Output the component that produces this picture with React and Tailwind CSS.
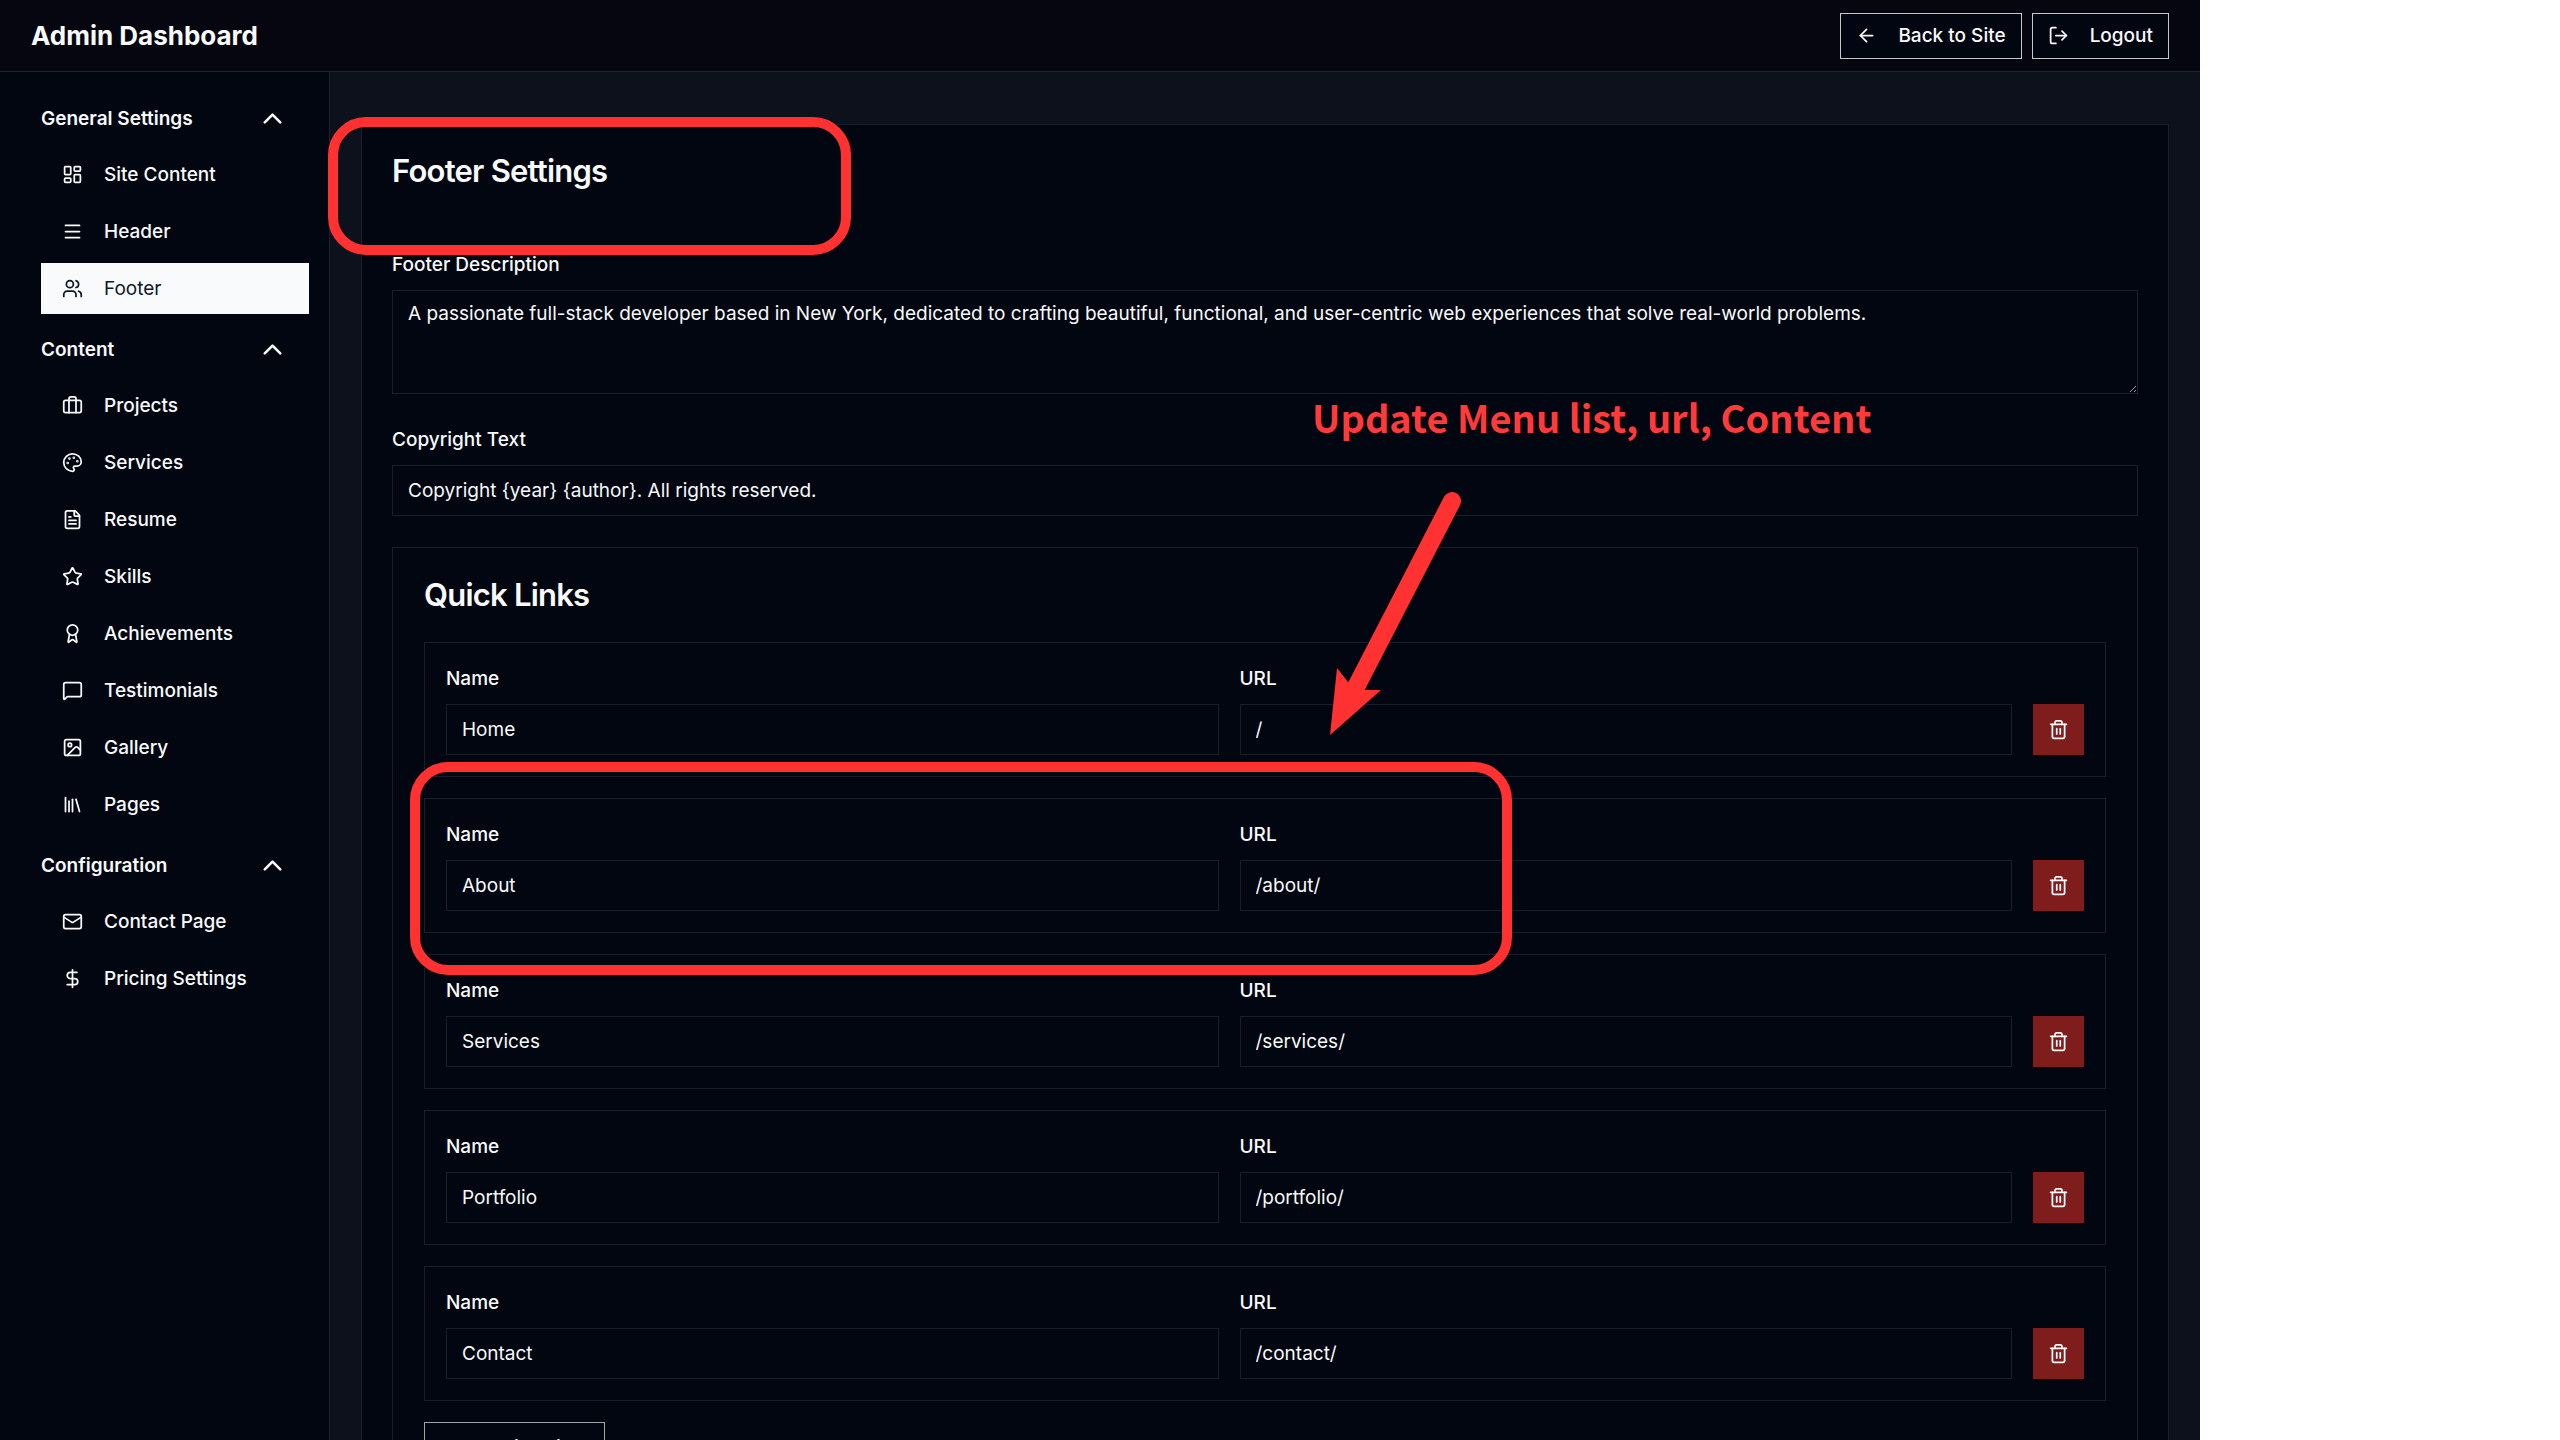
import {
  LayoutDashboard,
  Menu,
  Users,
  Briefcase,
  Palette,
  FileText,
  Star,
  Award,
  MessageSquare,
  Image,
  Library,
  Mail,
  DollarSign,
  ChevronUp,
  ArrowLeft,
  LogOut,
  Trash2
} from "lucide-react";

const NAV_GROUPS = [
  {
    title: "General Settings",
    items: [
      { label: "Site Content", icon: LayoutDashboard },
      { label: "Header", icon: Menu },
      { label: "Footer", icon: Users, active: true }
    ]
  },
  {
    title: "Content",
    items: [
      { label: "Projects", icon: Briefcase },
      { label: "Services", icon: Palette },
      { label: "Resume", icon: FileText },
      { label: "Skills", icon: Star },
      { label: "Achievements", icon: Award },
      { label: "Testimonials", icon: MessageSquare },
      { label: "Gallery", icon: Image },
      { label: "Pages", icon: Library }
    ]
  },
  {
    title: "Configuration",
    items: [
      { label: "Contact Page", icon: Mail },
      { label: "Pricing Settings", icon: DollarSign }
    ]
  }
];

const QUICK_LINKS = [
  { name: "Home", url: "/" },
  { name: "About", url: "/about/" },
  { name: "Services", url: "/services/" },
  { name: "Portfolio", url: "/portfolio/" },
  { name: "Contact", url: "/contact/" }
];

const Header = () => (
  <header className="flex h-[72px] items-center justify-between border-b border-[#1e222d] bg-[#05060f] px-[31px]">
    <h1 className="text-[26px] font-bold">Admin Dashboard</h1>
    <div className="flex gap-[10px]">
      <button className="flex h-[46px] items-center gap-[21px] border border-[#c5c7ca] bg-[#020610] px-[15px] font-medium">
        <ArrowLeft size={21} />
        Back to Site
      </button>
      <button className="flex h-[46px] items-center gap-[21px] border border-[#c5c7ca] bg-[#020610] px-[15px] font-medium">
        <LogOut size={21} />
        Logout
      </button>
    </div>
  </header>
);

const Sidebar = () => (
  <aside className="w-[330px] shrink-0 border-r border-[#1e222d] bg-[#020610] pt-[21px] pr-[20px] pl-[41px]">
    <nav className="flex flex-col gap-[10px]">
      {NAV_GROUPS.map((group) => (
        <div key={group.title} className="flex flex-col gap-[5px]">
          <button className="flex h-[51px] items-center justify-between pr-[21px] font-semibold">
            {group.title}
            <ChevronUp size={31} />
          </button>
          <ul className="flex flex-col gap-[6px]">
            {group.items.map(({ label, icon: Icon, active }) => (
              <li key={label}>
                <a
                  href="#"
                  className={
                    active
                      ? "flex h-[51px] items-center gap-[21px] bg-[#f8fafc] px-[21px] text-[#0f172a]"
                      : "flex h-[51px] items-center gap-[21px] px-[21px] font-medium"
                  }
                >
                  <Icon size={21} />
                  {label}
                </a>
              </li>
            ))}
          </ul>
        </div>
      ))}
    </nav>
  </aside>
);

const Field = ({ id, label, value }) => (
  <div className="flex min-w-0 flex-1 flex-col gap-[10px]">
    <label htmlFor={id} className="leading-[30px] font-medium">
      {label}
    </label>
    <input
      id={id}
      type="text"
      defaultValue={value}
      className="h-[51px] w-full border border-[#181e2a] bg-transparent px-[15px]"
    />
  </div>
);

const QuickLinkRow = ({ link, index }) => (
  <div className="flex items-end gap-[21px] border border-[#181e2a] p-[21px]">
    <Field id={`link-name-${index}`} label="Name" value={link.name} />
    <Field id={`link-url-${index}`} label="URL" value={link.url} />
    <button
      aria-label={`Delete ${link.name}`}
      className="flex h-[51px] w-[51px] shrink-0 items-center justify-center bg-[#7f1d1d]"
    >
      <Trash2 size={21} />
    </button>
  </div>
);

const FooterSettings = () => (
  <section className="border border-[#181e2a] bg-[#020610] p-[30px]">
    <h2 className="mb-[64px] text-[31px] leading-[31px] font-semibold tracking-tight">
      Footer Settings
    </h2>

    <div className="flex flex-col gap-[31px]">
      {/* DESCRIPTION */}
      <div className="flex flex-col gap-[10px]">
        <label htmlFor="description" className="leading-[30px] font-medium">
          Footer Description
        </label>
        <textarea
          id="description"
          className="h-[104px] w-full resize-y scheme-dark border border-[#181e2a] bg-transparent px-[15px] py-[10px] leading-[25px]"
          defaultValue="A passionate full-stack developer based in New York, dedicated to crafting beautiful, functional, and user-centric web experiences that solve real-world problems."
        />
      </div>

      {/* COPYRIGHT */}
      <Field
        id="copyright"
        label="Copyright Text"
        value="Copyright {year} {author}. All rights reserved."
      />

      {/* QUICK LINKS */}
      <div className="border border-[#181e2a] p-[31px]">
        <h2 className="mb-[32px] text-[31px] leading-[31px] font-semibold tracking-tight">
          Quick Links
        </h2>
        <div className="flex flex-col items-stretch gap-[21px]">
          {QUICK_LINKS.map((link, index) => (
            <QuickLinkRow key={link.name} link={link} index={index} />
          ))}
          <button className="h-[51px] self-start border border-[#a0a3a8] px-[21px] font-medium">
            Add Quick Link
          </button>
        </div>
      </div>
    </div>
  </section>
);

// Red callouts drawn over the page
const Annotations = () => (
  <div className="pointer-events-none absolute inset-0 text-[#ff3131]">
    <div className="absolute top-[117px] left-[328px] h-[138px] w-[523px] rounded-[38px] border-[10px] border-current" />
    <div className="absolute top-[762px] left-[410px] h-[213px] w-[1102px] rounded-[38px] border-[10px] border-current" />
    <p className="absolute top-[391px] left-[1312px] font-['Noto_Sans_CJK_SC',sans-serif] text-[38px] leading-[52px] font-bold whitespace-nowrap text-[#ff3a3a]">
      Update Menu list, url, Content
    </p>
    <svg
      width="136"
      height="246"
      viewBox="0 0 136 246"
      className="absolute top-[491px] left-[1328px]"
    >
      <path d="M124 10 L26 200" stroke="currentColor" strokeWidth="18" strokeLinecap="round" />
      <path d="M2 244 L9 177 L20 191 L36 199 L53 199 Z" fill="currentColor" />
    </svg>
  </div>
);

export default function App() {
  return (
    <div className="relative h-screen overflow-hidden bg-white font-['Inter',sans-serif] text-[19px] leading-[29px] text-[#f8fafc]">
      <div className="mr-[360px] flex h-full flex-col bg-[#0d111b]">
        <Header />
        <div className="flex min-h-0 flex-1">
          <Sidebar />
          <main className="min-w-0 flex-1 px-[31px] pt-[52px]">
            <FooterSettings />
          </main>
        </div>
      </div>
      <Annotations />
    </div>
  );
}
